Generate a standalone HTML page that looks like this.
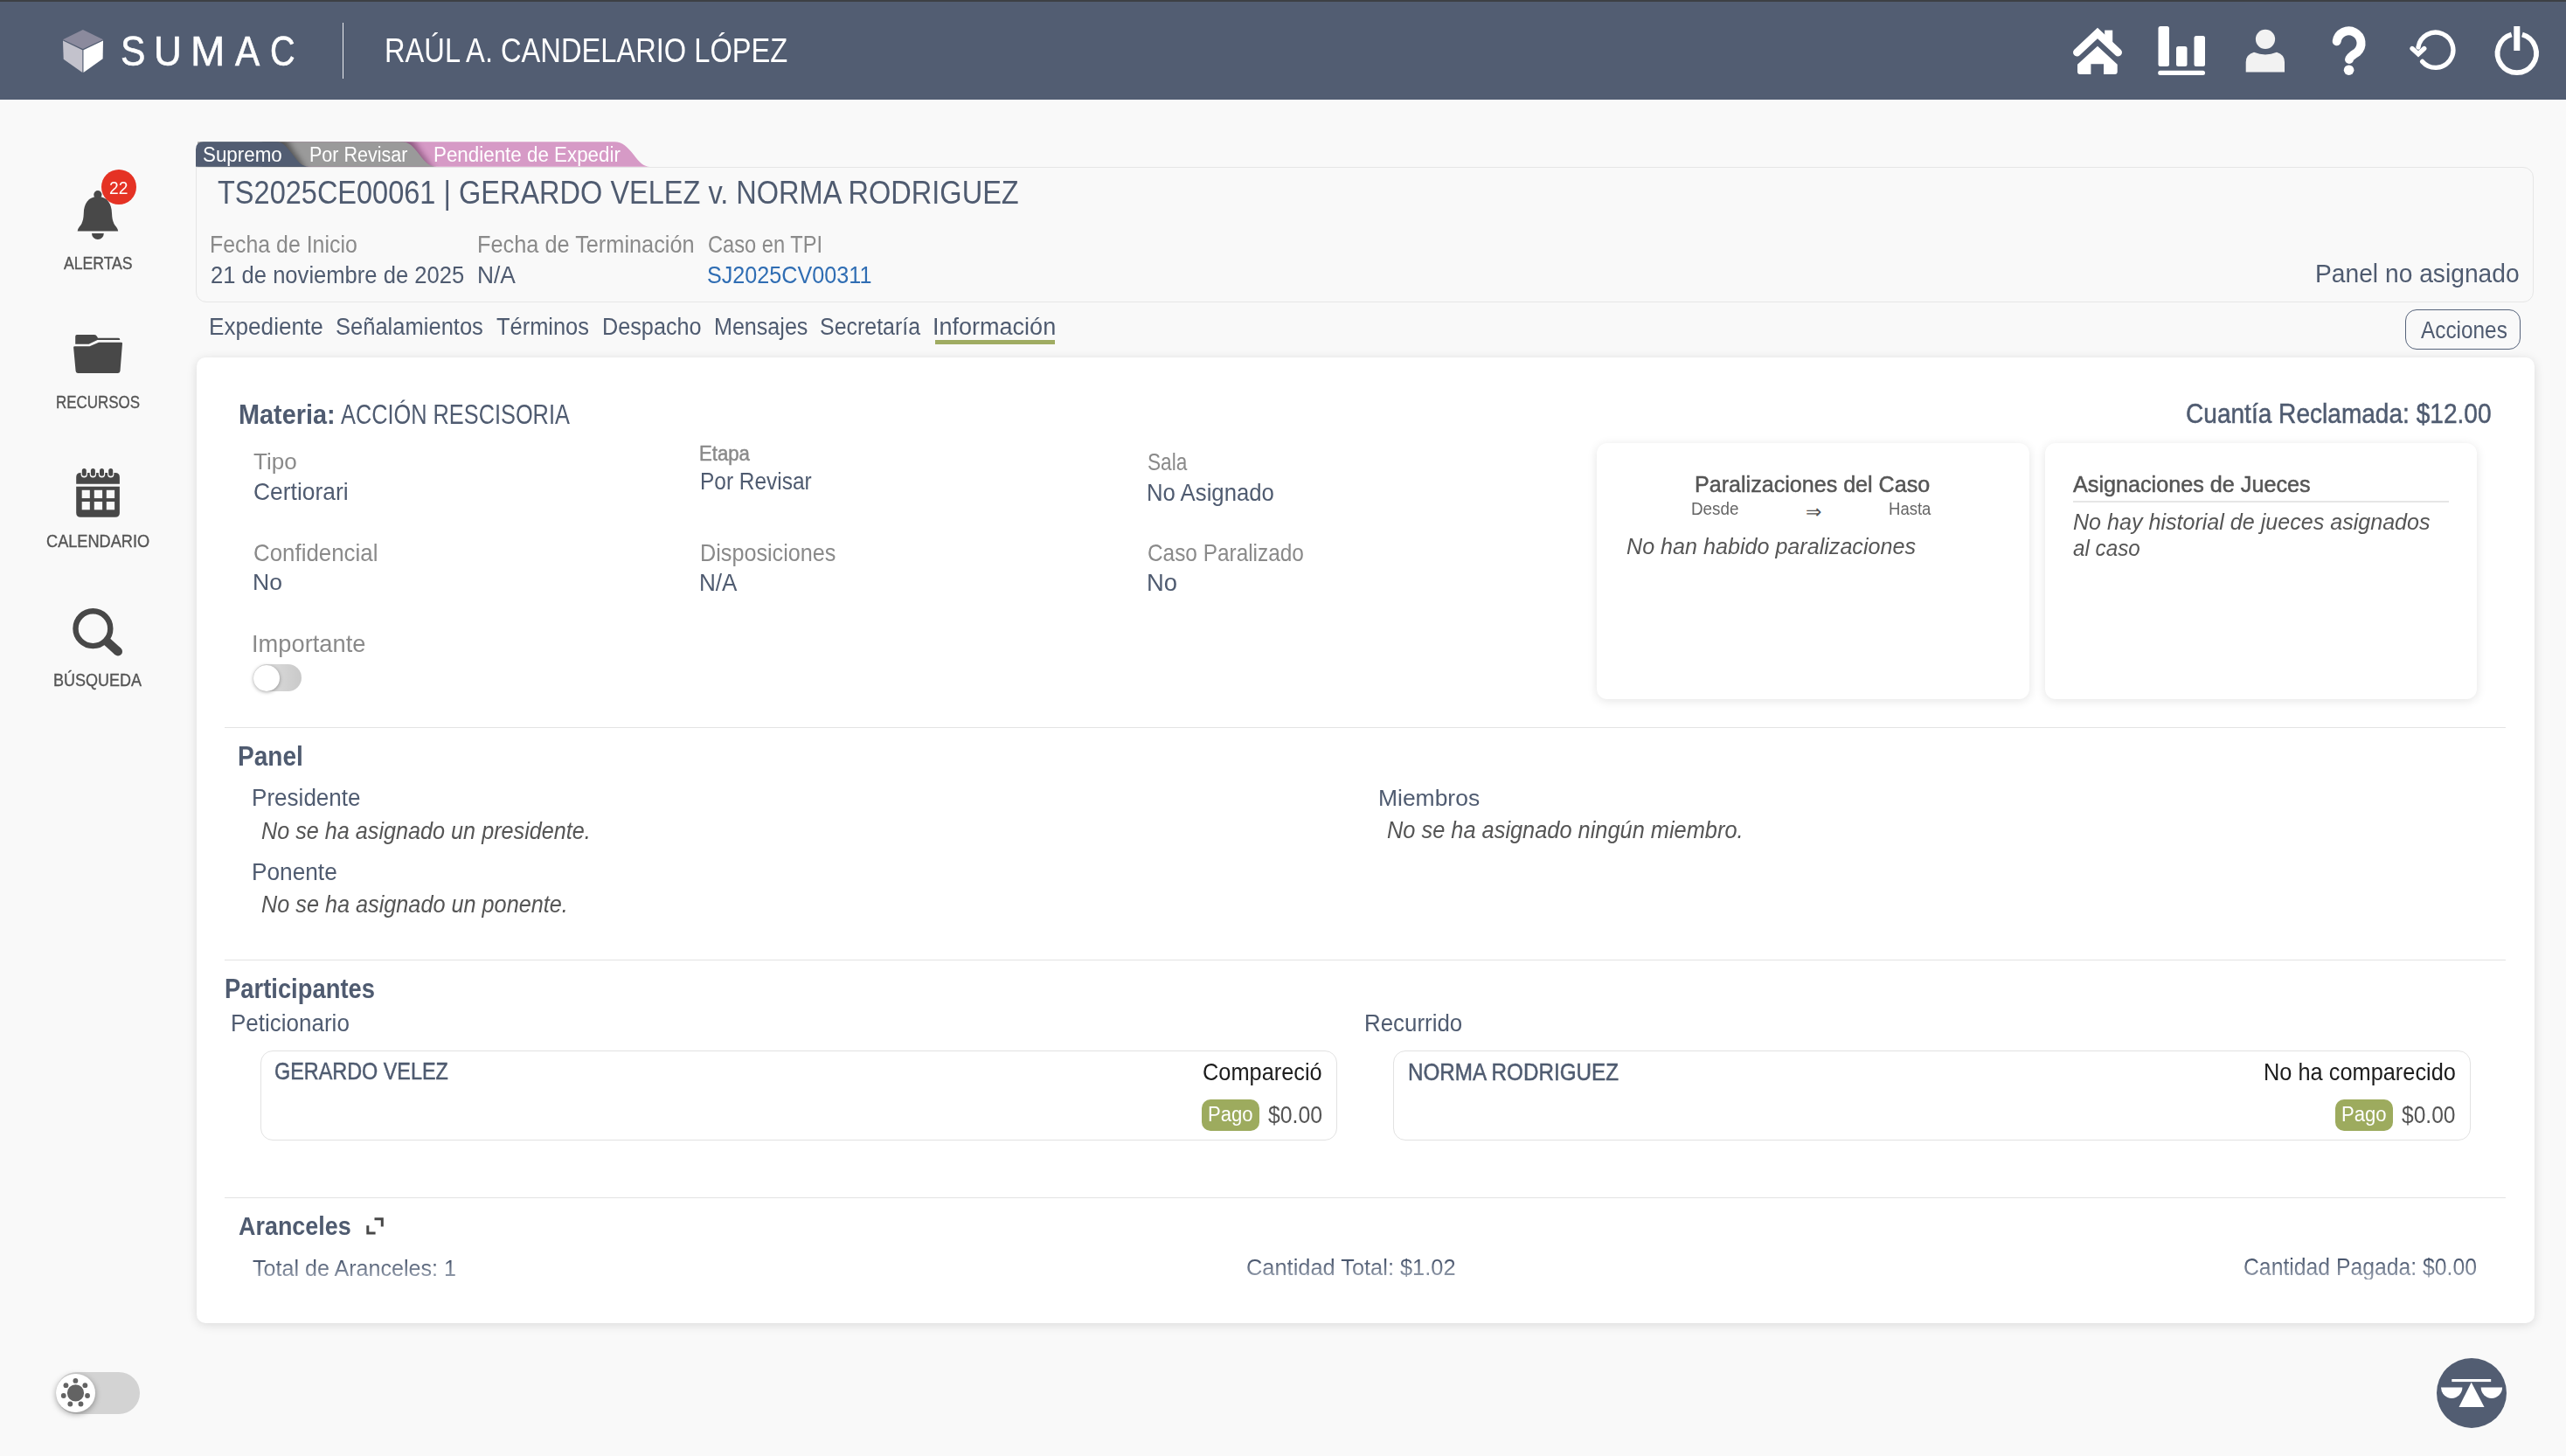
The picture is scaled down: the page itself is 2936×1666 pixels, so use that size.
<!DOCTYPE html>
<html lang="es"><head><meta charset="utf-8"><title>SUMAC</title>
<style>
html,body{margin:0;padding:0;}
body{width:2936px;height:1666px;overflow:hidden;position:relative;background:#f9f9f9;font-family:"Liberation Sans",sans-serif;}
.t{position:absolute;white-space:nowrap;line-height:1;transform-origin:0 0;}
.a{position:absolute;}
svg{position:absolute;overflow:visible;}
</style></head><body>
<div class="a" style="left:0;top:0;width:2936px;height:114px;background:#525d72"></div>
<div class="a" style="left:0;top:0;width:2936px;height:2px;background:#3d4044"></div>
<svg style="left:0;top:0" width="2936" height="114" viewBox="0 0 2936 114">
 <polygon points="72,45.2 94.9,34 118,45.2 94.9,56.1" fill="#8b8a9d"/>
 <polygon points="72,46.5 94.3,57.2 94.3,83.1 72.7,67.8" fill="#c3c2cc"/>
 <polygon points="95.5,57.2 118,46.5 117.6,67.3 95.5,83.1" fill="#ffffff"/>
 <g fill="#ffffff">
  <path d="M2400,52.7 L2422.7,73.8 V82 Q2422.7,85 2419.7,85 H2407 V73.2 H2392.4 V85 H2380 Q2377,85 2377,82 V73.8 Z"/>
  <rect x="2408.2" y="34.6" width="9" height="14"/>
 </g>
 <polyline points="2376.5,60 2400,38 2423.5,60" fill="none" stroke="#fff" stroke-width="9" stroke-linecap="round" stroke-linejoin="miter"/>
 <g fill="#ffffff">
  <rect x="2469.5" y="30" width="12.5" height="46" rx="2.5"/>
  <rect x="2490" y="53" width="12.5" height="23" rx="2.5"/>
  <rect x="2510.5" y="41" width="12.5" height="35" rx="2.5"/>
  <rect x="2469.2" y="80.8" width="53.8" height="5.2" rx="2.5"/>
 </g>
 <g fill="#f2f2f2">
  <circle cx="2592" cy="44.8" r="11.1"/>
  <path d="M2569.7,82.6 V71 Q2569.7,62.5 2579,59.8 Q2592,65 2605,59.8 Q2614,62.5 2614,71 V82.6 Z"/>
 </g>
 <path d="M2673.7,47.2 A14,14 0 1 1 2697,59.7 Q2688,65.2 2688,68" fill="none" stroke="#fff" stroke-width="10" stroke-linecap="round"/>
 <circle cx="2687.6" cy="80.2" r="5.8" fill="#fff"/>
 <path d="M2766.95,54.06 A20.1,20.1 0 1 1 2771.63,70.39" fill="none" stroke="#fff" stroke-width="5.3" stroke-linecap="round"/>
 <polyline points="2760,55.5 2767,61.8 2773.8,55.5" fill="none" stroke="#fff" stroke-width="5.3" stroke-linecap="round" stroke-linejoin="miter"/>
 <path d="M2885.9,39.56 A22.2,22.2 0 1 1 2873.7,39.56" fill="none" stroke="#fff" stroke-width="5.8"/>
 <rect x="2876.3" y="30" width="7" height="28" fill="#fff"/>
</svg>
<div class="a" style="left:391.6px;top:25.8px;width:1.6px;height:64.2px;background:#eceef2"></div>

<svg style="left:0;top:0" width="200" height="800" viewBox="0 0 200 800">
 <g fill="#484848">
  <circle cx="111.9" cy="222.7" r="4.6"/>
  <path d="M111.9,225 C101,225 96,233 95.8,244 C95.5,252 94,256 90.5,260 Q88.6,262.5 88.6,264.6 H135.2 Q135.2,262.5 133.3,260 C129.8,256 128.3,252 128,244 C127.8,233 122.8,225 111.9,225 Z"/>
  <path d="M105,267 H118.8 A6.9,6.9 0 0 1 105,267 Z"/>
 </g>
 <circle cx="136" cy="214" r="20" fill="#e53224"/>
 <g fill="#484848">
  <path d="M86.2,385 Q86.2,383 88,383 H108 Q110,383 111,385 L112,386.8 H135.5 Q137.3,386.8 137.3,388.9 H111.5 L101.6,393.8 H86.2 Z"/>
  <path d="M84.1,397.5 Q84.1,396.3 85.5,396.3 H102.5 L113,391.7 H138.8 Q140,391.7 140,393 L137.5,424.5 Q137.3,426.9 135,426.9 H89 Q86.8,426.9 86.6,424.5 Z"/>
 </g>
 <g fill="#484848">
  <path d="M87.2,553.8 V546 Q87.2,541 92.2,541 H131.9 Q136.9,541 136.9,546 V553.8 Z"/>
  <path d="M87.2,556.7 H136.9 V586.7 Q136.9,591.7 131.9,591.7 H92.2 Q87.2,591.7 87.2,586.7 Z"/>
 </g>
 <g fill="#f9f9f9">
  <rect x="92.6" y="535" width="7.4" height="11.5" rx="3.7"/>
  <rect x="102.7" y="535" width="7.4" height="11.5" rx="3.7"/>
  <rect x="112.8" y="535" width="7.4" height="11.5" rx="3.7"/>
  <rect x="123" y="535" width="7.4" height="11.5" rx="3.7"/>
  <rect x="93.7" y="560.8" width="9.1" height="9.3"/>
  <rect x="107.8" y="560.8" width="9.3" height="9.3"/>
  <rect x="121.8" y="560.8" width="9.3" height="9.3"/>
  <rect x="93.7" y="574" width="9.1" height="9.3"/>
  <rect x="107.8" y="574" width="9.3" height="9.3"/>
  <rect x="121.8" y="574" width="9.3" height="9.3"/>
 </g>
 <g fill="#484848">
  <rect x="93.8" y="536" width="5" height="8.7" rx="2.5"/>
  <rect x="103.9" y="536" width="5" height="8.7" rx="2.5"/>
  <rect x="114" y="536" width="5" height="8.7" rx="2.5"/>
  <rect x="124.2" y="536" width="5" height="8.7" rx="2.5"/>
 </g>
 <circle cx="106.4" cy="719.2" r="19.9" fill="none" stroke="#484848" stroke-width="6.4"/>
 <line x1="119" y1="731" x2="135" y2="745.5" stroke="#484848" stroke-width="10"/>
 <circle cx="135" cy="745.5" r="5" fill="#484848"/>
</svg>

<div class="a" style="left:223.8px;top:190.7px;width:2675.7px;height:155px;box-sizing:border-box;border:1.5px solid #e6e6e6;border-radius:0 12px 12px 12px"></div>
<svg style="left:0;top:150px" width="800" height="50" viewBox="0 150 800 50">
 <defs>
  <filter id="bl" x="-30%" y="-100%" width="160%" height="300%"><feGaussianBlur stdDeviation="3.5"/></filter>
  <clipPath id="band"><rect x="226" y="162.2" width="574" height="28.5"/></clipPath>
 </defs>
 <path d="M330,190.7 V162.2 H703 C712,162.2 718,168 725,177 C732,186 736,190.7 744,190.7 Z" fill="#d69ac6"/>
 <g clip-path="url(#band)"><path d="M300,198 V155 H463 C473,155 477,168 484,177 C491,186 495,198 505,198 Z" fill="#3a1030" opacity="0.45" filter="url(#bl)"/></g>
 <path d="M300,190.7 V162.2 H459 C469,162.2 473,168 480,177 C487,186 491,190.7 500,190.7 Z" fill="#9a9a9a"/>
 <g clip-path="url(#band)"><path d="M224,198 V155 H320 C328,155 332,168 339,177 C346,186 349,198 358,198 Z" fill="#000" opacity="0.45" filter="url(#bl)"/></g>
 <path d="M224,190.7 V171 Q224,162.2 233,162.2 H316 C324,162.2 328,168 335,177 C342,186 345,190.7 354,190.7 Z" fill="#525d72"/>
</svg>

<div class="a" style="left:2752px;top:354px;width:132px;height:46px;box-sizing:border-box;border:1.5px solid #56637a;border-radius:13px"></div>
<div class="a" style="left:1070px;top:389.2px;width:137.3px;height:4.9px;background:#a0ac62"></div>

<div class="a" style="left:224.5px;top:409px;width:2675px;height:1104.5px;background:#fff;border-radius:10px;box-shadow:0 2px 12px rgba(0,0,0,0.13)"></div>
<div class="a" style="left:1827px;top:507px;width:495px;height:292.5px;background:#fff;border-radius:12px;box-shadow:0 2px 12px rgba(0,0,0,0.11)"></div>
<div class="a" style="left:2340.3px;top:507px;width:494px;height:292.5px;background:#fff;border-radius:12px;box-shadow:0 2px 12px rgba(0,0,0,0.11)"></div>
<div class="a" style="left:2372px;top:573px;width:430px;height:2px;background:#e6e6e6"></div>
<div class="a" style="left:2066px;top:575px;font-size:22px;line-height:1;color:#555;font-family:'Liberation Sans'">&#8658;</div>

<div class="a" style="left:289.7px;top:760.2px;width:55.2px;height:31px;border-radius:15.5px;background:linear-gradient(to right,#e4e4e4,#c9c9c9)"></div>
<div class="a" style="left:289.7px;top:760.7px;width:30px;height:30px;border-radius:50%;background:#fff;box-shadow:0 1px 4px rgba(0,0,0,0.35)"></div>

<div class="a" style="left:257px;top:831.8px;width:2610px;height:1.3px;background:#e3e3e3"></div>
<div class="a" style="left:257px;top:1098.2px;width:2610px;height:1.3px;background:#e3e3e3"></div>
<div class="a" style="left:257px;top:1369.9px;width:2610px;height:1.3px;background:#e3e3e3"></div>

<div class="a" style="left:297.5px;top:1202.4px;width:1232px;height:102.2px;box-sizing:border-box;border:1.5px solid #e2e2e2;border-radius:14px"></div>
<div class="a" style="left:1594.3px;top:1202.4px;width:1232.3px;height:102.2px;box-sizing:border-box;border:1.5px solid #e2e2e2;border-radius:14px"></div>
<div class="a" style="left:1375px;top:1258.1px;width:66px;height:35.7px;border-radius:10px;background:#9dab5e"></div>
<div class="a" style="left:2672px;top:1258.1px;width:66px;height:35.7px;border-radius:10px;background:#9dab5e"></div>

<svg style="left:400px;top:1380px" width="60" height="50" viewBox="400 1380 60 50">
 <path d="M428.5,1394.8 H437.3 V1403.6" fill="none" stroke="#484848" stroke-width="3"/>
 <path d="M420.8,1402.2 V1411 H429.6" fill="none" stroke="#484848" stroke-width="3"/>
</svg>

<div class="a" style="left:64px;top:1569.9px;width:95.8px;height:47.8px;border-radius:24px;background:#d3d3d3"></div>
<div class="a" style="left:64px;top:1571.6px;width:44.6px;height:44.6px;border-radius:50%;background:#fff;box-shadow:0 2px 7px rgba(0,0,0,0.35)"></div>
<svg style="left:60px;top:1565px" width="60" height="60" viewBox="60 1565 60 60">
 <g fill="#636363">
  <circle cx="86.5" cy="1593.9" r="9.6"/>
  <circle cx="86.40" cy="1579.90" r="2.9"/><circle cx="97.35" cy="1585.17" r="2.9"/><circle cx="100.05" cy="1597.02" r="2.9"/><circle cx="92.47" cy="1606.51" r="2.9"/><circle cx="80.33" cy="1606.51" r="2.9"/><circle cx="72.75" cy="1597.02" r="2.9"/><circle cx="75.45" cy="1585.17" r="2.9"/>
 </g>
</svg>

<svg style="left:2780px;top:1545px" width="100" height="100" viewBox="2780 1545 100 100">
 <circle cx="2828" cy="1593.9" r="40" fill="#525d72"/>
 <g fill="#fff">
  <rect x="2805.3" y="1578" width="44.9" height="3.1"/>
  <polygon points="2827.7,1581.7 2842.5,1609.9 2813.5,1609.9"/>
  <path d="M2793,1587.6 H2817.4 A12.2,12.4 0 0 1 2793,1587.6 Z"/>
  <path d="M2838.7,1587.6 H2863.1 A12.2,12.4 0 0 1 2838.7,1587.6 Z"/>
 </g>
</svg>

<div class="t" style="left:138.0px;top:34.9px;font-size:47.83px;color:#ffffff;transform:scaleX(0.8893);-webkit-text-stroke:0.6px #fff;">S</div>
<div class="t" style="left:175.5px;top:34.9px;font-size:47.83px;color:#ffffff;transform:scaleX(0.9222);-webkit-text-stroke:0.6px #fff;">U</div>
<div class="t" style="left:217.6px;top:34.9px;font-size:47.83px;color:#ffffff;transform:scaleX(0.9906);-webkit-text-stroke:0.6px #fff;">M</div>
<div class="t" style="left:269.2px;top:34.9px;font-size:47.83px;color:#ffffff;transform:scaleX(0.8844);-webkit-text-stroke:0.6px #fff;">A</div>
<div class="t" style="left:308.8px;top:34.9px;font-size:47.83px;color:#ffffff;transform:scaleX(0.8290);-webkit-text-stroke:0.6px #fff;">C</div>
<div class="t" style="left:440.4px;top:39.2px;font-size:38.12px;color:#ffffff;transform:scaleX(0.8564);">RAÚL A. CANDELARIO LÓPEZ</div>
<div class="t" style="left:73.2px;top:292.0px;font-size:19.57px;color:#555555;transform:scaleX(0.9000);-webkit-text-stroke:0.35px #555;">ALERTAS</div>
<div class="t" style="left:63.9px;top:450.0px;font-size:20.29px;color:#555555;transform:scaleX(0.8348);-webkit-text-stroke:0.35px #555;">RECURSOS</div>
<div class="t" style="left:52.9px;top:609.1px;font-size:20.29px;color:#555555;transform:scaleX(0.8962);-webkit-text-stroke:0.35px #555;">CALENDARIO</div>
<div class="t" style="left:60.9px;top:767.8px;font-size:20.29px;color:#555555;transform:scaleX(0.8866);-webkit-text-stroke:0.35px #555;">BÚSQUEDA</div>
<div class="t" style="left:125.0px;top:206.0px;font-size:19.42px;color:#ffffff;transform:scaleX(0.9900);">22</div>
<div class="t" style="left:231.6px;top:165.7px;font-size:23.62px;color:#ffffff;transform:scaleX(0.9468);">Supremo</div>
<div class="t" style="left:353.5px;top:165.7px;font-size:23.62px;color:#ffffff;transform:scaleX(0.9107);">Por Revisar</div>
<div class="t" style="left:496.4px;top:165.7px;font-size:23.62px;color:#ffffff;transform:scaleX(0.9473);">Pendiente de Expedir</div>
<div class="t" style="left:248.6px;top:201.8px;font-size:37.83px;color:#4f5b70;transform:scaleX(0.8595);">TS2025CE00061 | GERARDO VELEZ v. NORMA RODRIGUEZ</div>
<div class="t" style="left:240.2px;top:266.2px;font-size:27.97px;color:#8a8a8a;transform:scaleX(0.8898);">Fecha de Inicio</div>
<div class="t" style="left:546.2px;top:266.2px;font-size:27.97px;color:#8a8a8a;transform:scaleX(0.9052);">Fecha de Terminación</div>
<div class="t" style="left:809.9px;top:266.2px;font-size:27.97px;color:#8a8a8a;transform:scaleX(0.8454);">Caso en TPI</div>
<div class="t" style="left:241.1px;top:299.5px;font-size:28.26px;color:#4f5b70;transform:scaleX(0.9057);">21 de noviembre de 2025</div>
<div class="t" style="left:546.1px;top:299.5px;font-size:28.26px;color:#4f5b70;transform:scaleX(0.9333);">N/A</div>
<div class="t" style="left:808.9px;top:299.5px;font-size:28.26px;color:#2f6db3;transform:scaleX(0.8909);">SJ2025CV00311</div>
<div class="t" style="left:2649.2px;top:297.7px;font-size:30.29px;color:#4f5b70;transform:scaleX(0.9312);">Panel no asignado</div>
<div class="t" style="left:239.1px;top:360.1px;font-size:27.39px;color:#4f5b70;transform:scaleX(0.9552);">Expediente</div>
<div class="t" style="left:384.1px;top:360.1px;font-size:27.39px;color:#4f5b70;transform:scaleX(0.9326);">Señalamientos</div>
<div class="t" style="left:568.1px;top:360.1px;font-size:27.39px;color:#4f5b70;transform:scaleX(0.9286);">Términos</div>
<div class="t" style="left:688.6px;top:360.1px;font-size:27.39px;color:#4f5b70;transform:scaleX(0.9217);">Despacho</div>
<div class="t" style="left:816.7px;top:360.1px;font-size:27.39px;color:#4f5b70;transform:scaleX(0.9167);">Mensajes</div>
<div class="t" style="left:938.2px;top:360.1px;font-size:27.39px;color:#4f5b70;transform:scaleX(0.9113);">Secretaría</div>
<div class="t" style="left:1067.4px;top:360.1px;font-size:27.39px;color:#4f5b70;transform:scaleX(0.9870);">Información</div>
<div class="t" style="left:2769.5px;top:364.5px;font-size:26.96px;color:#4f5b70;transform:scaleX(0.9037);">Acciones</div>
<div class="t" style="left:272.5px;top:458.6px;font-size:30.43px;color:#4f5b70;transform:scaleX(0.9491);font-weight:bold;">Materia:</div>
<div class="t" style="left:390.0px;top:458.6px;font-size:30.43px;color:#4f5b70;transform:scaleX(0.8328);">ACCIÓN RESCISORIA</div>
<div class="t" style="left:2501.1px;top:457.5px;font-size:31.30px;color:#4f5b70;transform:scaleX(0.8969);-webkit-text-stroke:0.5px #4f5b70;">Cuantía Reclamada: $12.00</div>
<div class="t" style="left:289.5px;top:515.4px;font-size:26.23px;color:#8a8a8a;transform:scaleX(0.9937);">Tipo</div>
<div class="t" style="left:289.5px;top:548.9px;font-size:27.54px;color:#4f5b70;transform:scaleX(0.9591);">Certiorari</div>
<div class="t" style="left:289.6px;top:618.5px;font-size:27.97px;color:#8a8a8a;transform:scaleX(0.9252);">Confidencial</div>
<div class="t" style="left:288.5px;top:653.3px;font-size:26.67px;color:#4f5b70;transform:scaleX(0.9968);">No</div>
<div class="t" style="left:287.5px;top:723.7px;font-size:26.96px;color:#8a8a8a;transform:scaleX(1.0120);">Importante</div>
<div class="t" style="left:800.4px;top:507.8px;font-size:23.48px;color:#8a8a8a;transform:scaleX(0.9450);-webkit-text-stroke:0.5px #8a8a8a;">Etapa</div>
<div class="t" style="left:800.6px;top:536.9px;font-size:27.97px;color:#4f5b70;transform:scaleX(0.8743);">Por Revisar</div>
<div class="t" style="left:800.5px;top:618.4px;font-size:28.55px;color:#8a8a8a;transform:scaleX(0.8827);">Disposiciones</div>
<div class="t" style="left:800.4px;top:652.6px;font-size:27.54px;color:#4f5b70;transform:scaleX(0.9477);">N/A</div>
<div class="t" style="left:1313.4px;top:515.3px;font-size:27.10px;color:#8a8a8a;transform:scaleX(0.8358);">Sala</div>
<div class="t" style="left:1312.3px;top:549.6px;font-size:27.10px;color:#4f5b70;transform:scaleX(0.9497);">No Asignado</div>
<div class="t" style="left:1313.3px;top:618.4px;font-size:28.55px;color:#8a8a8a;transform:scaleX(0.8541);">Caso Paralizado</div>
<div class="t" style="left:1312.2px;top:652.6px;font-size:27.54px;color:#4f5b70;transform:scaleX(0.9937);">No</div>
<div class="t" style="left:1939.1px;top:540.8px;font-size:26.38px;color:#555555;transform:scaleX(0.9514);-webkit-text-stroke:0.5px #555555;">Paralizaciones del Caso</div>
<div class="t" style="left:1934.6px;top:573.4px;font-size:19.71px;color:#666666;transform:scaleX(0.9574);">Desde</div>
<div class="t" style="left:2161.0px;top:573.4px;font-size:19.71px;color:#666666;transform:scaleX(0.9408);">Hasta</div>
<div class="t" style="left:1860.6px;top:612.3px;font-size:26.52px;color:#555555;transform:scaleX(0.9474);font-style:italic;">No han habido paralizaciones</div>
<div class="t" style="left:2372.0px;top:541.1px;font-size:26.38px;color:#555555;transform:scaleX(0.9549);-webkit-text-stroke:0.5px #555555;">Asignaciones de Jueces</div>
<div class="t" style="left:2372.1px;top:584.0px;font-size:26.67px;color:#555555;transform:scaleX(0.9410);font-style:italic;">No hay historial de jueces asignados</div>
<div class="t" style="left:2372.1px;top:613.9px;font-size:26.67px;color:#555555;transform:scaleX(0.9084);font-style:italic;">al caso</div>
<div class="t" style="left:272.4px;top:850.0px;font-size:31.30px;color:#4f5b70;transform:scaleX(0.8962);font-weight:bold;">Panel</div>
<div class="t" style="left:288.2px;top:899.4px;font-size:27.10px;color:#4f5b70;transform:scaleX(0.9619);">Presidente</div>
<div class="t" style="left:298.6px;top:937.3px;font-size:27.10px;color:#555555;transform:scaleX(0.9299);font-style:italic;">No se ha asignado un presidente.</div>
<div class="t" style="left:288.2px;top:983.6px;font-size:27.10px;color:#4f5b70;transform:scaleX(0.9684);">Ponente</div>
<div class="t" style="left:298.6px;top:1021.0px;font-size:27.10px;color:#555555;transform:scaleX(0.9315);font-style:italic;">No se ha asignado un ponente.</div>
<div class="t" style="left:1577.1px;top:899.6px;font-size:26.23px;color:#4f5b70;transform:scaleX(1.0089);">Miembros</div>
<div class="t" style="left:1587.4px;top:937.1px;font-size:26.81px;color:#555555;transform:scaleX(0.9467);font-style:italic;">No se ha asignado ningún miembro.</div>
<div class="t" style="left:256.8px;top:1116.0px;font-size:31.45px;color:#4f5b70;transform:scaleX(0.8711);font-weight:bold;">Participantes</div>
<div class="t" style="left:264.4px;top:1157.5px;font-size:26.96px;color:#4f5b70;transform:scaleX(0.9645);">Peticionario</div>
<div class="t" style="left:1561.4px;top:1157.3px;font-size:27.39px;color:#4f5b70;transform:scaleX(0.9457);">Recurrido</div>
<div class="t" style="left:314.2px;top:1212.4px;font-size:27.68px;color:#4f5b70;transform:scaleX(0.8453);-webkit-text-stroke:0.5px #4f5b70;">GERARDO VELEZ</div>
<div class="t" style="left:1376.3px;top:1212.5px;font-size:27.68px;color:#1c1c1c;transform:scaleX(0.9163);">Compareció</div>
<div class="t" style="left:1381.6px;top:1264.3px;font-size:23.04px;color:#ffffff;transform:scaleX(0.9588);">Pago</div>
<div class="t" style="left:1450.5px;top:1262.0px;font-size:27.10px;color:#555555;transform:scaleX(0.9164);">$0.00</div>
<div class="t" style="left:1610.6px;top:1212.5px;font-size:27.68px;color:#4f5b70;transform:scaleX(0.8758);-webkit-text-stroke:0.5px #4f5b70;">NORMA RODRIGUEZ</div>
<div class="t" style="left:2589.5px;top:1212.5px;font-size:27.68px;color:#1c1c1c;transform:scaleX(0.9165);">No ha comparecido</div>
<div class="t" style="left:2678.6px;top:1264.3px;font-size:23.04px;color:#ffffff;transform:scaleX(0.9588);">Pago</div>
<div class="t" style="left:2747.7px;top:1262.0px;font-size:27.10px;color:#555555;transform:scaleX(0.9075);">$0.00</div>
<div class="t" style="left:272.6px;top:1389.4px;font-size:28.99px;color:#4f5b70;transform:scaleX(0.9287);font-weight:bold;">Aranceles</div>
<div class="t" style="left:288.6px;top:1437.8px;font-size:26.09px;color:#5d687b;transform:scaleX(0.9625);background:linear-gradient(to bottom,#46536a 15%,#8d96a6 85%);-webkit-background-clip:text;background-clip:text;-webkit-text-fill-color:transparent;">Total de Aranceles: 1</div>
<div class="t" style="left:1425.7px;top:1437.4px;font-size:26.38px;color:#5d687b;transform:scaleX(0.9628);background:linear-gradient(to bottom,#46536a 15%,#8d96a6 85%);-webkit-background-clip:text;background-clip:text;-webkit-text-fill-color:transparent;">Cantidad Total: $1.02</div>
<div class="t" style="left:2567.3px;top:1436.4px;font-size:27.54px;color:#5d687b;transform:scaleX(0.8990);background:linear-gradient(to bottom,#46536a 15%,#8d96a6 85%);-webkit-background-clip:text;background-clip:text;-webkit-text-fill-color:transparent;">Cantidad Pagada: $0.00</div>
</body></html>
